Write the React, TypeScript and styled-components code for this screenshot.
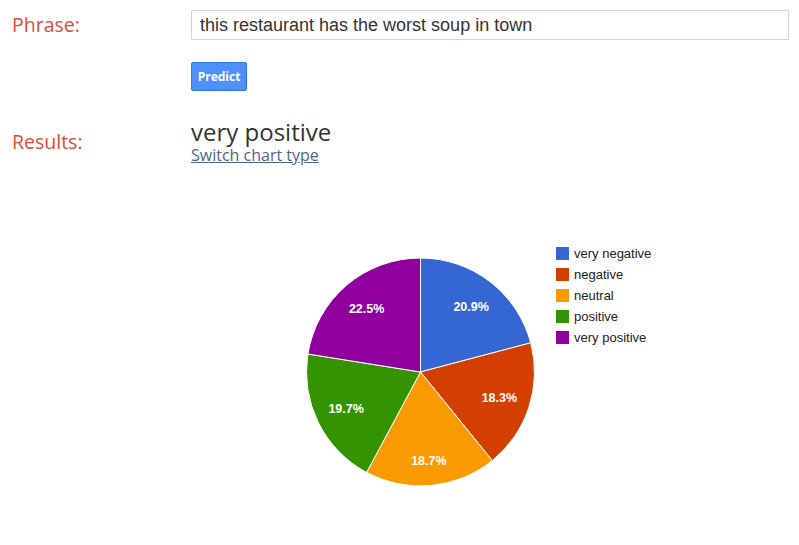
import styled, { createGlobalStyle } from "styled-components";

const GlobalStyle = createGlobalStyle`
  html, body {
    margin: 0;
    padding: 0;
    background: #fff;
  }
  body {
    font-family: "Open Sans", "Liberation Sans", sans-serif;
    color: #333;
  }
`;

const Page = styled.div`
  display: grid;
  grid-template-columns: 191px 598px;
  padding-top: 10px;
`;

const Label = styled.div<{ $offset?: number }>`
  padding-left: 12px;
  padding-top: ${(p) => p.$offset || 0}px;
  font-size: 19.5px;
  line-height: 28px;
  color: #dd4b39;
`;

const PhraseLabel = styled(Label)`
  line-height: 30px;
`;

const Cell = styled.div`
  display: flex;
  flex-direction: column;
  align-items: flex-start;
`;

const Input = styled.input`
  box-sizing: border-box;
  width: 598px;
  height: 30px;
  margin: 0;
  padding: 0 8px;
  border: 1px solid #d4d4d4;
  border-radius: 1px;
  font-family: "Liberation Sans", Arial, sans-serif;
  font-size: 18px;
  color: #333;
  outline: none;
`;

const Button = styled.button`
  box-sizing: border-box;
  margin-top: 22px;
  width: 56px;
  height: 29px;
  padding: 0;
  border: 1px solid #3079ed;
  border-radius: 2px;
  background: #4d90fe;
  color: #fff;
  font-family: "Open Sans", sans-serif;
  font-weight: 700;
  font-size: 12px;
  cursor: pointer;
`;

const Spacer = styled.div<{ $h: number }>`
  grid-column: 1 / -1;
  height: ${(p) => p.$h}px;
`;

const Verdict = styled.div`
  font-size: 24px;
  line-height: 24px;
  color: #333;
`;

const SwitchLink = styled.a`
  margin-top: 2px;
  font-size: 16px;
  line-height: 19px;
  color: #4e6589;
  text-decoration: underline;
  cursor: pointer;
`;

const Chart = styled.svg`
  display: block;
  margin-top: 10px;
`;

const slices = [
  { name: "very negative", value: 20.9, color: "#3567d4", dist: 83 },
  { name: "negative", value: 18.3, color: "#d33f00", dist: 83 },
  { name: "neutral", value: 18.7, color: "#f99b00", dist: 89 },
  { name: "positive", value: 19.7, color: "#339300", dist: 83 },
  { name: "very positive", value: 22.5, color: "#8f009f", dist: 83 },
];

const PieChart = () => {
  const cx = 229.5;
  const cy = 197;
  const r = 114;
  const total = slices.reduce((s, x) => s + x.value, 0);
  let start = 0;
  const pt = (a: number, rad: number) => [
    cx + rad * Math.sin(a),
    cy - rad * Math.cos(a),
  ];
  return (
    <Chart width={598} height={360}>
      {slices.map((s) => {
        const a0 = start;
        const a1 = start + (s.value / total) * Math.PI * 2;
        start = a1;
        const [x0, y0] = pt(a0, r);
        const [x1, y1] = pt(a1, r);
        const [lx, ly] = pt((a0 + a1) / 2, s.dist);
        const large = a1 - a0 > Math.PI ? 1 : 0;
        return (
          <g key={s.name}>
            <path
              d={`M${cx},${cy} L${x0},${y0} A${r},${r} 0 ${large} 1 ${x1},${y1} Z`}
              fill={s.color}
              stroke="#fff"
              strokeWidth={1}
            />
            <text
              x={lx}
              y={ly + 4.5}
              textAnchor="middle"
              fill="#fff"
              fontFamily="Liberation Sans, Arial, sans-serif"
              fontWeight={700}
              fontSize={12.5}
            >
              {s.value}%
            </text>
          </g>
        );
      })}
      {slices.map((s, i) => (
        <g key={`l-${s.name}`}>
          <rect x={365} y={72 + i * 21} width={13} height={13} fill={s.color} />
          <text
            x={383}
            y={83 + i * 21}
            fill="#222"
            fontFamily="Liberation Sans, Arial, sans-serif"
            fontSize={13}
          >
            {s.name}
          </text>
        </g>
      ))}
    </Chart>
  );
};

export default function App() {
  return (
    <>
      <GlobalStyle />
      <Page>
        <PhraseLabel>Phrase:</PhraseLabel>
        <Cell>
          <Input defaultValue="this restaurant has the worst soup in town" />
          <Button>Predict</Button>
        </Cell>
        <Spacer $h={29} />
        <Label $offset={8}>Results:</Label>
        <Cell>
          <Verdict>very positive</Verdict>
          <SwitchLink>Switch chart type</SwitchLink>
          <PieChart />
        </Cell>
      </Page>
    </>
  );
}
